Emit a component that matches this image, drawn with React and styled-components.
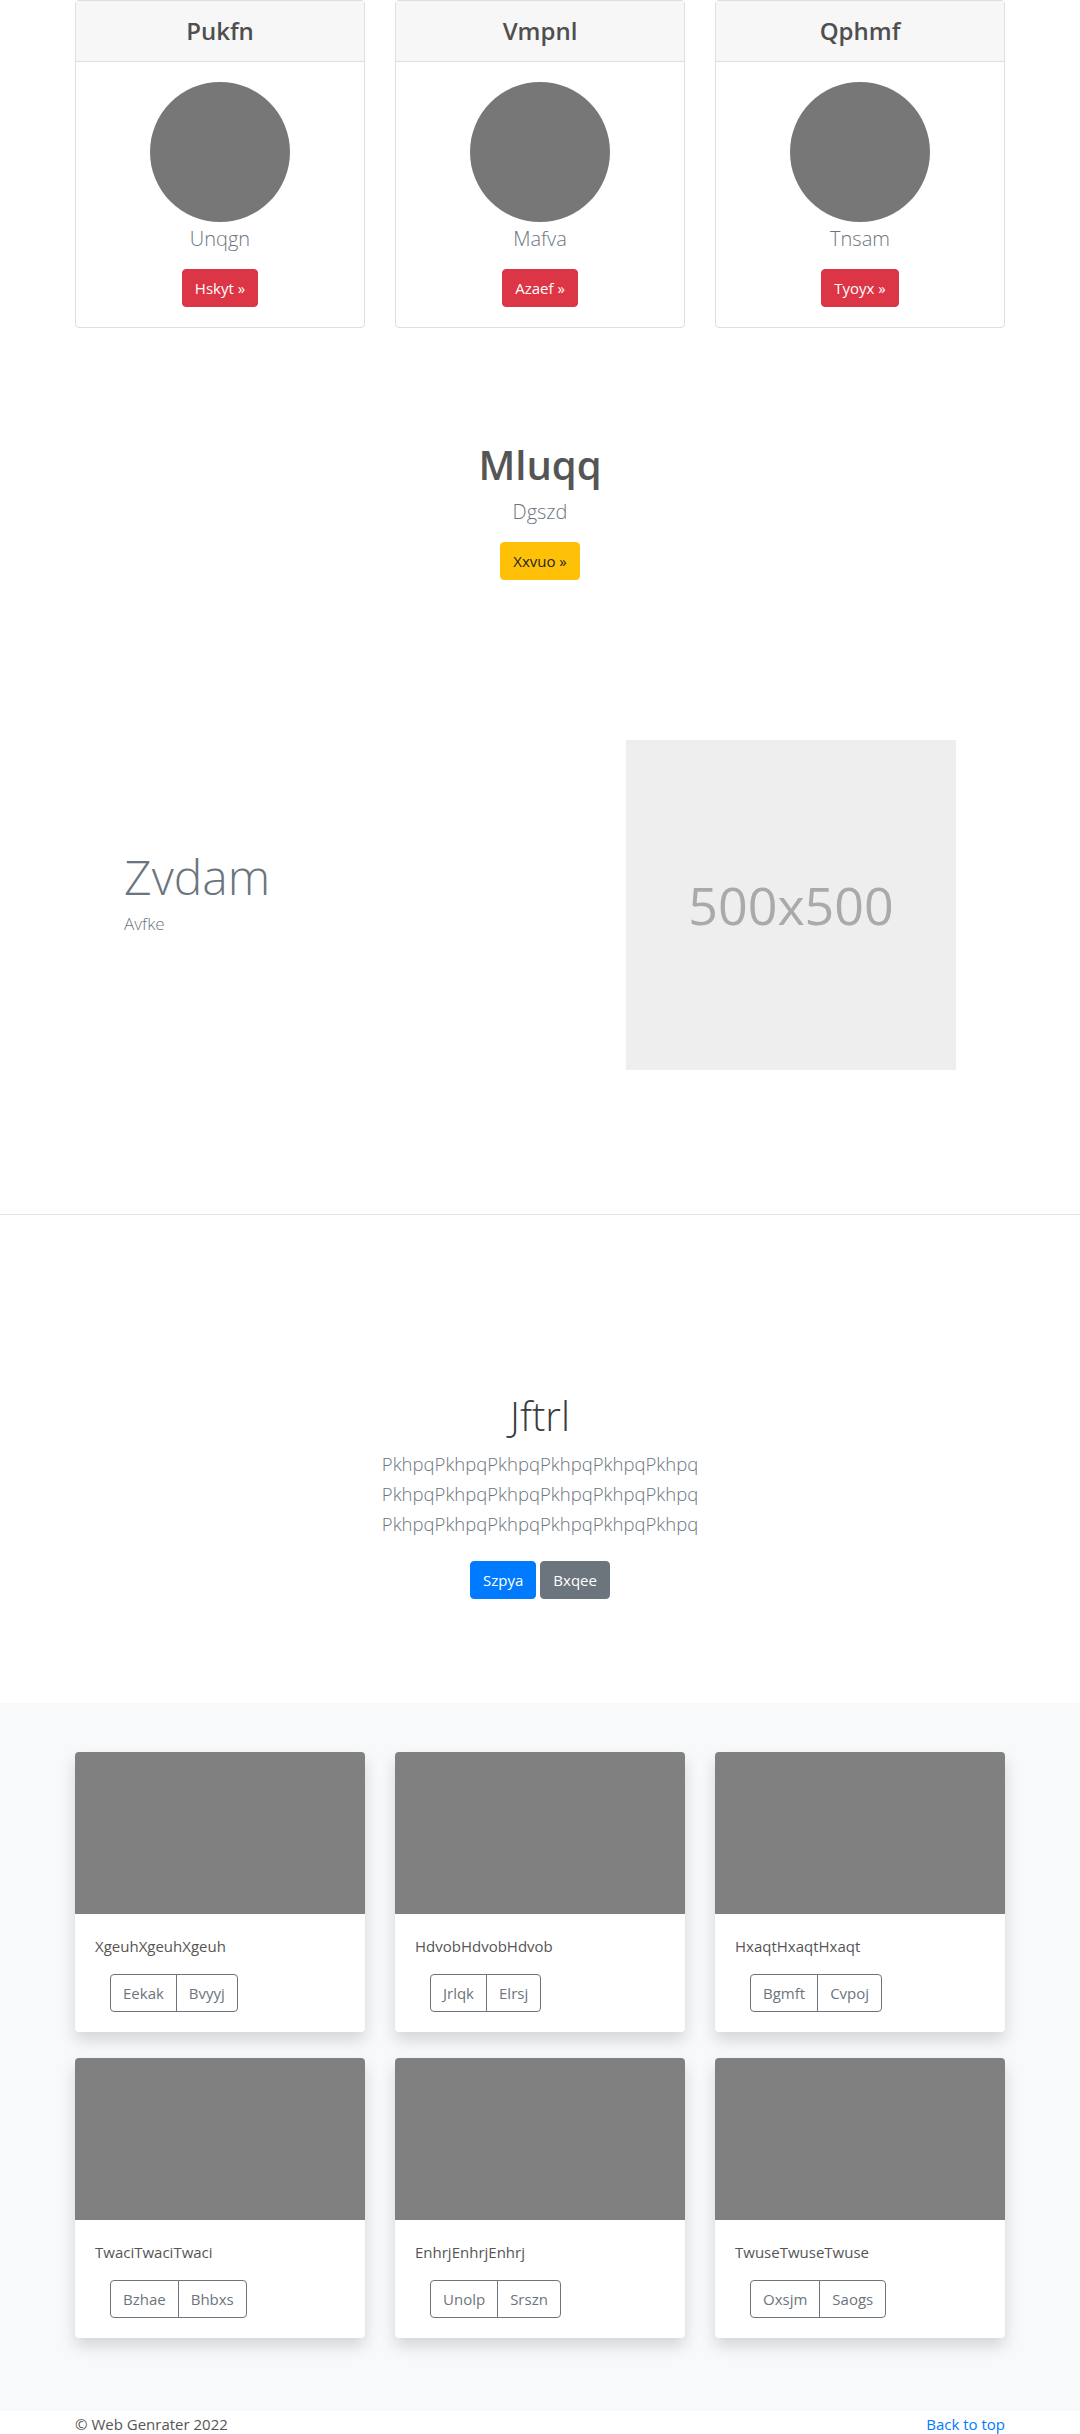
import styled, { createGlobalStyle, css } from "styled-components";

const GlobalStyle = createGlobalStyle`
  * { box-sizing: border-box; }
  body {
    margin: 0;
    background: #fff;
    color: #212529;
    font-family: "Open Sans", "Noto Sans", sans-serif;
    font-size: 16px;
    line-height: 1.5;
  }
`;

const Container = styled.div`
  width: 960px;
  margin: 0 auto;
  padding: 0 15px;
`;

const Deck = styled.div`
  display: grid;
  grid-template-columns: repeat(3, 290px);
  column-gap: 30px;
  row-gap: ${(p) => p.$rowGap || 0}px;
`;

const PriceCard = styled.div`
  border: 1px solid #dfdfdf;
  border-radius: 4px;
  text-align: center;
  background: #fff;
`;

const PriceHeader = styled.div`
  height: 61px;
  background: #f7f7f7;
  border-bottom: 1px solid #dfdfdf;
  display: flex;
  align-items: center;
  justify-content: center;
  font-size: 24px;
  font-weight: 600;
  color: #4f4f4f;
`;

const PriceBody = styled.div`
  padding: 20px;
  display: flex;
  flex-direction: column;
  align-items: center;
`;

const Avatar = styled.div`
  width: 140px;
  height: 140px;
  border-radius: 50%;
  background: #777;
`;

const Caption = styled.div`
  font-size: 20px;
  line-height: 30px;
  font-weight: 300;
  color: #6c757d;
  margin: 2px 0 15px;
`;

const variants = {
  danger: css`background: #dc3545; border-color: #dc3545; color: #fff;`,
  warning: css`background: #ffc107; border-color: #ffc107; color: #212529;`,
  primary: css`background: #007bff; border-color: #007bff; color: #fff;`,
  secondary: css`background: #6c757d; border-color: #6c757d; color: #fff;`,
};

const Button = styled.a`
  display: inline-block;
  height: 38px;
  padding: 6px 12px;
  border: 1px solid transparent;
  border-radius: 4px;
  font-size: 15px;
  line-height: 24px;
  text-decoration: none;
  cursor: pointer;
  ${(p) => variants[p.$variant]}
`;

const Hero = styled.section`
  margin-top: 113px;
  text-align: center;
`;

const HeroTitle = styled.h1`
  margin: 0;
  font-size: 40px;
  line-height: 48px;
  font-weight: 600;
  color: #555;
`;

const HeroSub = styled.p`
  margin: 8px 0 15px;
  font-size: 20px;
  line-height: 30px;
  font-weight: 300;
  color: #6c757d;
`;

const Feature = styled.section`
  display: flex;
  align-items: center;
  margin-top: 160px;
  margin-bottom: 144px;
`;

const FeatureText = styled.div`
  flex: 1;
  padding-left: 49px;
`;

const FeatureTitle = styled.h2`
  margin: 0 0 3px;
  font-size: 48px;
  line-height: 60px;
  font-weight: 300;
  color: #6c757d;
`;

const FeatureSub = styled.p`
  margin: 0 0 26px;
  font-size: 17px;
  line-height: 27px;
  font-weight: 300;
  color: #6c757d;
`;

const Placeholder = styled.div`
  width: 330px;
  height: 330px;
  margin-right: 49px;
  background: #eee;
  color: #aaa;
  display: flex;
  align-items: center;
  justify-content: center;
  font-size: 52px;
`;

const Rule = styled.hr`
  margin: 0;
  border: 0;
  border-top: 1px solid #e5e5e5;
`;

const Jumbo = styled.section`
  text-align: center;
  padding: 177px 0 104px;
`;

const JumboTitle = styled.h1`
  margin: 0 0 9px;
  font-size: 40px;
  line-height: 48px;
  font-weight: 300;
  color: #3a3a3a;
`;

const Lead = styled.p`
  margin: 0 0 22px;
  font-size: 18.5px;
  line-height: 30px;
  font-weight: 300;
  color: #6c757d;
`;

const LeadLine = styled.span`
  display: block;
`;

const ButtonRow = styled.div`
  display: flex;
  justify-content: center;
  gap: 4px;
`;

const Album = styled.section`
  background: #f8f9fa;
  padding: 49px 0 73px;
`;

const AlbumCard = styled.div`
  background: #fff;
  border-radius: 4px;
  overflow: hidden;
  box-shadow: 0 8px 16px rgba(0, 0, 0, 0.15);
`;

const Thumb = styled.div`
  height: 162px;
  background: #808080;
`;

const AlbumBody = styled.div`
  padding: 20px;
`;

const AlbumText = styled.p`
  margin: 0 0 16px;
  font-size: 15px;
  line-height: 24px;
  color: #555;
`;

const Group = styled.div`
  display: inline-flex;
  margin-left: 15px;
`;

const GroupButton = styled.button`
  height: 38px;
  padding: 6px 12px;
  font-family: inherit;
  font-size: 15px;
  line-height: 24px;
  color: #6c757d;
  background: transparent;
  border: 1px solid #6c757d;
  border-radius: 4px 0 0 4px;
  & + & {
    margin-left: -1px;
    border-radius: 0 4px 4px 0;
  }
`;

const Footer = styled.footer`
  padding-top: 1px;
  display: flex;
  justify-content: space-between;
  font-size: 15px;
  line-height: 24px;
  color: #555;
`;

const TopLink = styled.a`
  color: #007bff;
  text-decoration: none;
`;

const pricing = [
  { title: "Pukfn", name: "Unqgn", cta: "Hskyt" },
  { title: "Vmpnl", name: "Mafva", cta: "Azaef" },
  { title: "Qphmf", name: "Tnsam", cta: "Tyoyx" },
];

const album = [
  { text: "XgeuhXgeuhXgeuh", a: "Eekak", b: "Bvyyj" },
  { text: "HdvobHdvobHdvob", a: "Jrlqk", b: "Elrsj" },
  { text: "HxaqtHxaqtHxaqt", a: "Bgmft", b: "Cvpoj" },
  { text: "TwaciTwaciTwaci", a: "Bzhae", b: "Bhbxs" },
  { text: "EnhrjEnhrjEnhrj", a: "Unolp", b: "Srszn" },
  { text: "TwuseTwuseTwuse", a: "Oxsjm", b: "Saogs" },
];

export default function App() {
  return (
    <>
      <GlobalStyle />
      <Container>
        <Deck>
          {pricing.map((p) => (
            <PriceCard key={p.title}>
              <PriceHeader>{p.title}</PriceHeader>
              <PriceBody>
                <Avatar />
                <Caption>{p.name}</Caption>
                <Button $variant="danger">{p.cta} »</Button>
              </PriceBody>
            </PriceCard>
          ))}
        </Deck>

        <Hero>
          <HeroTitle>Mluqq</HeroTitle>
          <HeroSub>Dgszd</HeroSub>
          <Button $variant="warning">Xxvuo »</Button>
        </Hero>

        <Feature>
          <FeatureText>
            <FeatureTitle>Zvdam</FeatureTitle>
            <FeatureSub>Avfke</FeatureSub>
          </FeatureText>
          <Placeholder>500x500</Placeholder>
        </Feature>
      </Container>

      <Rule />

      <Jumbo>
        <JumboTitle>Jftrl</JumboTitle>
        <Lead>
          {[0, 1, 2].map((i) => (
            <LeadLine key={i}>PkhpqPkhpqPkhpqPkhpqPkhpqPkhpq</LeadLine>
          ))}
        </Lead>
        <ButtonRow>
          <Button $variant="primary">Szpya</Button>
          <Button $variant="secondary">Bxqee</Button>
        </ButtonRow>
      </Jumbo>

      <Album>
        <Container>
          <Deck $rowGap={26}>
            {album.map((c) => (
              <AlbumCard key={c.text}>
                <Thumb />
                <AlbumBody>
                  <AlbumText>{c.text}</AlbumText>
                  <Group>
                    <GroupButton>{c.a}</GroupButton>
                    <GroupButton>{c.b}</GroupButton>
                  </Group>
                </AlbumBody>
              </AlbumCard>
            ))}
          </Deck>
        </Container>
      </Album>

      <Container>
        <Footer>
          <span>© Web Genrater 2022</span>
          <TopLink href="#">Back to top</TopLink>
        </Footer>
      </Container>
    </>
  );
}
